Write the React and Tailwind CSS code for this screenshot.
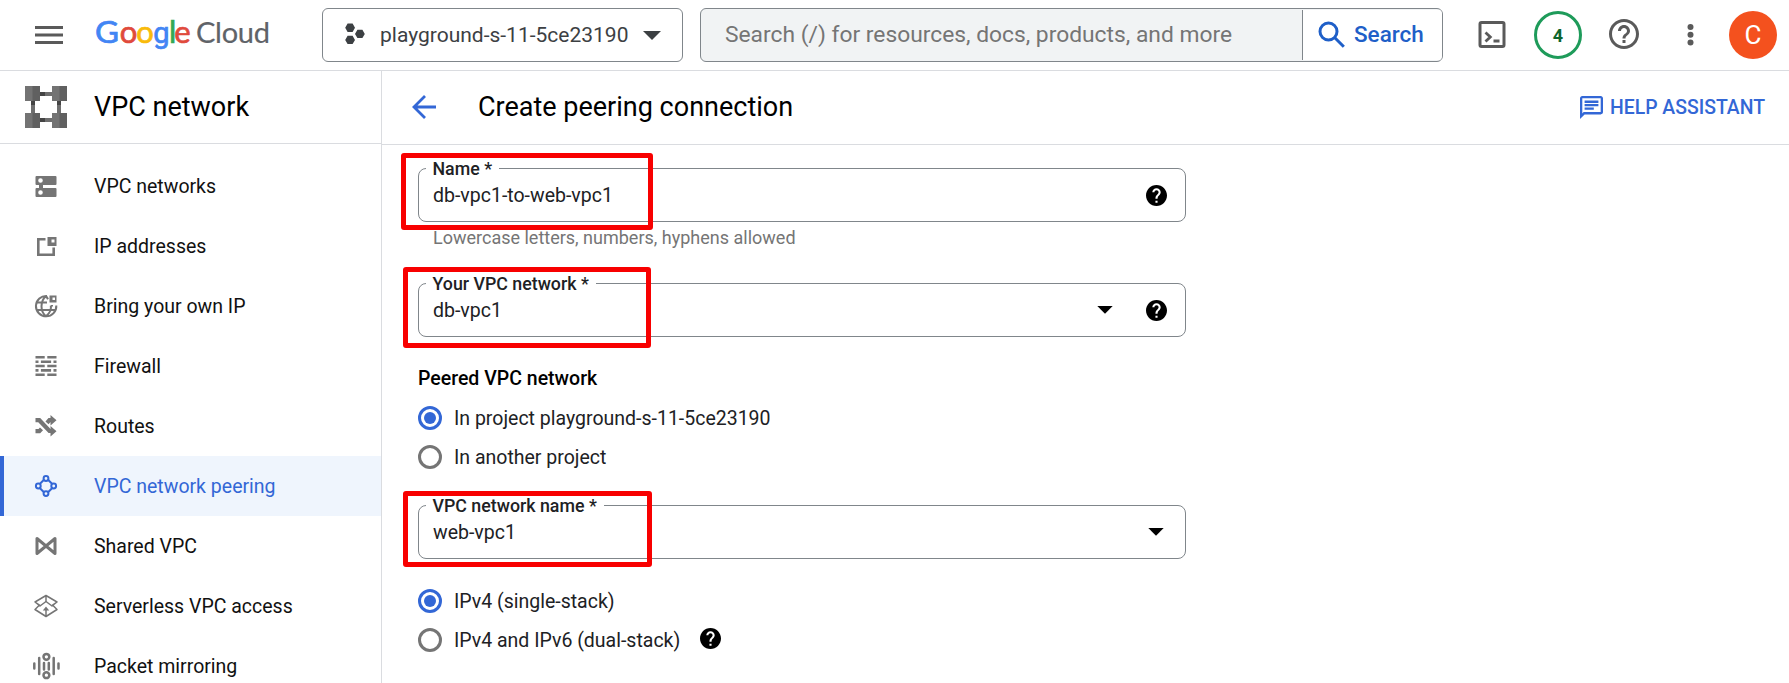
function NavIcon({ name }) {
  const p = { width: 28, height: 28, viewBox: "0 0 28 28", fill: "none", className: "shrink-0" };
  switch (name) {
    case "networks":
      return (
        <svg {...p}>
          <path fill="currentColor" fillRule="evenodd" d="M4.500 4h19a1 1 0 0 1 1 1v7a1 1 0 0 1-1 1H11v3h12.500a1 1 0 0 1 1 1v7a1 1 0 0 1-1 1h-19a1 1 0 0 1-1-1v-7a1 1 0 0 1 1-1H7v-3H4.500a1 1 0 0 1-1-1V5a1 1 0 0 1 1-1zM8.500 6.200a2.300 2.300 0 1 0 0 4.600a2.300 2.300 0 0 0 0-4.600zM8.500 18.200a2.300 2.300 0 1 0 0 4.600a2.300 2.300 0 0 0 0-4.600z" />
        </svg>
      );
    case "ip":
      return (
        <svg {...p}>
          <path stroke="currentColor" strokeWidth="2.600" d="M13.500 7.300H6.300v15.400h15.400V15.500" />
          <path fill="currentColor" fillRule="evenodd" d="M15.500 5h9v9h-9zM19.500 7.500v3h3v-3z" />
        </svg>
      );
    case "globe":
      return (
        <svg {...p} stroke="currentColor" strokeWidth="2">
          <path d="M15 4A10.200 10.200 0 1 0 24.300 13.500M4.800 10.500H15M4.800 18h18.500M14 4.200C8 9 8 19.500 14 24.200C18 21 19.500 17 18.800 13.500M14 4.200c1 1 1.500 2 2 3M20 13v1.500" />
          <path stroke="none" fill="currentColor" fillRule="evenodd" d="M17.500 3.500h7v7h-7zM20.500 5.500v2.500h2.500V5.500z" />
        </svg>
      );
    case "firewall":
      return (
        <svg {...p} stroke="currentColor" strokeWidth="2.600">
          <path d="M3.500 5.300h9.200M15.300 5.300h9.200M3.500 9.700h3M8.900 9.700h10.200M21.500 9.700h3M3.500 14h9.200M15.300 14h9.200M3.500 18.400h3M8.900 18.400h10.200M21.500 18.400h3M3.500 22.800h9.200M15.300 22.800h9.200" />
        </svg>
      );
    case "routes":
      return (
        <svg {...p}>
          <path stroke="currentColor" strokeWidth="4.200" d="M3.500 8.200h3.800L17.500 19h2.500M3.500 19.200h3.800l2.200-2.300M15 10.800l2.400-2.600H20" />
          <path fill="currentColor" d="M18.500 3l6 5.200-6 5.200zM18.500 14l6 5.200-6 5.200z" />
        </svg>
      );
    case "peering":
      return (
        <svg {...p} stroke="currentColor" strokeWidth="2">
          <circle cx="14" cy="6.500" r="2.400" />
          <circle cx="6.300" cy="14" r="2.400" />
          <circle cx="21.700" cy="14" r="2.400" />
          <circle cx="14" cy="21.600" r="2.400" />
          <path d="M11.700 8L8 11.700M16.300 8L20 11.700M8 16.300l3.700 3.700M20 16.300l-3.700 3.700" />
        </svg>
      );
    case "shared":
      return (
        <svg {...p} stroke="currentColor" strokeWidth="3" strokeLinejoin="round">
          <path d="M5 6.500v15L23 6.500v15z" />
        </svg>
      );
    case "serverless":
      return (
        <svg {...p} stroke="currentColor" strokeWidth="1.500" strokeLinejoin="round">
          <path d="M14 3.500L25 10l-4.500 3L25 17.500 14 24.500 3 17.500l4.500-4.500L3 10zM3 10l5 4 6-4.500M25 10l-5 4-6-4.500M14 3.500v6M14 24.500V16" />
          <path d="M10.800 18.500L14 14.500l3.200 4z" fill="currentColor" stroke="none" />
        </svg>
      );
    default:
      return (
        <svg {...p} stroke="currentColor" strokeWidth="2.500" strokeLinecap="round">
          <circle cx="14.400" cy="4.800" r="2.900" />
          <circle cx="14.400" cy="23.200" r="2.900" />
          <path d="M2.300 11.500v5M7.200 6v16M21.700 6v16M26.500 11.500v5M12 11v6.500M16.800 11v6.500" />
        </svg>
      );
  }
}

function Logo() {
  return (
    <svg width="180" height="44" viewBox="0 0 180 44" className="ml-[32px] shrink-0 font-['Lato',sans-serif]" aria-label="Google Cloud">
      <g fontSize="31" strokeWidth="0.700">
        <text x="0" y="30" fill="#4285f4" stroke="#4285f4" textLength="24" lengthAdjust="spacingAndGlyphs">G</text>
        <text x="24.700" y="30" fill="#e04a3c" stroke="#e04a3c">o</text>
        <text x="41.300" y="30" fill="#f9bb0b" stroke="#f9bb0b">o</text>
        <text x="58.300" y="30" fill="#4285f4" stroke="#4285f4" className="font-['Roboto',sans-serif]" fontSize="29">g</text>
        <text x="74.100" y="30" fill="#34a853" stroke="#34a853">l</text>
        <text x="79.300" y="30" fill="#e04a3c" stroke="#e04a3c">e</text>
      </g>
      <text x="101" y="30" fontSize="29" textLength="74" fill="#5f6368" stroke="#5f6368" strokeWidth="0.200">Cloud</text>
    </svg>
  );
}

function HelpFilled() {
  return (
    <svg width="21" height="21" viewBox="2 2 20 20" className="shrink-0 text-black">
      <path fill="currentColor" d="M12 2C6.480 2 2 6.480 2 12s4.480 10 10 10 10-4.480 10-10S17.520 2 12 2zm1 17h-2v-2h2v2zm2.070-7.750l-.9.920C13.450 12.900 13 13.500 13 15h-2v-.5c0-1.100.45-2.100 1.170-2.830l1.240-1.260c.37-.36.59-.86.59-1.410 0-1.100-.9-2-2-2s-2 .9-2 2H8c0-2.210 1.790-4 4-4s4 1.790 4 4c0 .88-.36 1.680-.93 2.250z" />
    </svg>
  );
}

function Caret() {
  return (
    <svg width="16" height="8" viewBox="0 0 16 8" className="shrink-0">
      <path d="M0.300 0h15.400L8 7.800z" fill="#000" />
    </svg>
  );
}

function Field({ label, value, mark, children }) {
  return (
    <div className="relative flex h-[54px] w-[768px] items-center rounded-lg border border-[#80868b] pl-[14px] pr-[18px]">
      <span className="absolute -top-[13px] left-[6.500px] bg-white px-[7px] text-[17.800px] font-medium leading-[25px] text-[#202124]">
        {label}
      </span>
      <span className="flex-1 pt-[2px] text-[19.500px] leading-[24px] text-[#202124]">{value}</span>
      {children}
      <div className={"absolute rounded-[3px] border-[5px] border-[#f80000] " + mark} />
    </div>
  );
}

function Radio({ label, checked, children }) {
  return (
    <div className="flex h-[39px] items-center">
      <span className={"flex size-6 items-center justify-center rounded-full border-[3px] " + (checked ? "border-[#3367d6]" : "border-[#757575]")}>
        {checked && <span className="size-3 rounded-full bg-[#3367d6]" />}
      </span>
      <span className="ml-3 pt-[2px] text-[19.500px] leading-[24px] text-[#202124]">{label}</span>
      {children}
    </div>
  );
}

const NAV = [
  ["networks", "VPC networks"],
  ["ip", "IP addresses"],
  ["globe", "Bring your own IP"],
  ["firewall", "Firewall"],
  ["routes", "Routes"],
  ["peering", "VPC network peering"],
  ["shared", "Shared VPC"],
  ["serverless", "Serverless VPC access"],
  ["mirroring", "Packet mirroring"],
];

export default function App() {
  return (
    <div className="flex h-[683px] w-[1789px] flex-col overflow-hidden bg-white font-['Roboto',sans-serif] text-black">
      <header className="flex h-[71px] shrink-0 items-center border-b border-[#dadce0]">
        <svg width="28" height="18" viewBox="0 0 28 18" className="ml-[35px] shrink-0">
          <path d="M0 1.500h28M0 9h28M0 16.500h28" stroke="#5a5a5a" strokeWidth="3" />
        </svg>
        <Logo />
        <div className="ml-[47px] flex h-[54px] w-[361px] shrink-0 items-center rounded-md border border-[#80868b] pl-[22px]">
          <svg width="20" height="22" viewBox="0 0 20 22" fill="#3c4043" className="mb-[3px] shrink-0">
            <path d="M2.600 0.500h5l2.400 4.200-2.400 4.200h-5L.2 4.700zM2.600 12.700h5l2.400 4.200-2.400 4.200h-5L.2 16.900zM12.400 6.700h5l2.400 4.200-2.400 4.200h-5L10 10.900z" />
          </svg>
          <span className="ml-[15px] text-[21px] leading-[28px] text-[#3c4043]">playground-s-11-5ce23190</span>
          <svg width="18" height="9" viewBox="0 0 18 9" className="ml-auto mr-[21px] shrink-0">
            <path d="M0 0h18L9 9z" fill="#3c4043" />
          </svg>
        </div>
        <div className="ml-[17px] flex h-[54px] w-[743px] shrink-0 items-center overflow-hidden rounded-md border border-[#80868b] bg-[#f1f3f4]">
          <span className="flex-1 pl-6 text-[22.800px] leading-[28px] text-[#757575]">Search (/) for resources, docs, products, and more</span>
          <span className="flex h-[50px] w-[140px] items-center border-l border-[#80868b] bg-white pl-[15px] text-[#1f5fc8]">
            <svg width="28" height="28" viewBox="0 0 28 28" fill="none" stroke="currentColor" strokeWidth="3" className="shrink-0">
              <circle cx="10.500" cy="10.500" r="8.500" />
              <path d="M16.800 16.800l9 9" />
            </svg>
            <span className="mb-[2px] ml-2 text-[22.500px] font-medium leading-[28px]">Search</span>
          </span>
        </div>
        <svg width="28" height="28" viewBox="0 0 28 28" fill="none" stroke="#5a5a5a" className="ml-[35px] shrink-0">
          <rect x="2" y="1.500" width="24" height="24" rx="1.500" strokeWidth="3" />
          <path d="M7.500 11.500l4.800 4.500-4.800 4.500M15.500 20h6" strokeWidth="2.800" />
        </svg>
        <span className="ml-7 flex size-12 shrink-0 items-center justify-center rounded-full border-[3px] border-[#1e9b5a] text-[18px] font-bold text-[#0d652d]">4</span>
        <svg width="30" height="30" viewBox="2 2 20 20" fill="#5a5a5a" className="mb-[2px] ml-[27px] shrink-0">
          <path d="M11 18h2v-2h-2v2zm1-16C6.480 2 2 6.480 2 12s4.480 10 10 10 10-4.480 10-10S17.520 2 12 2zm0 18c-4.410 0-8-3.590-8-8s3.590-8 8-8 8 3.590 8 8-3.590 8-8 8zm0-14c-2.210 0-4 1.790-4 4h2c0-1.100.9-2 2-2s2 .9 2 2c0 2-3 1.750-3 5h2c0-2.250 3-2.500 3-5 0-2.210-1.790-4-4-4z" />
        </svg>
        <svg width="7" height="22" viewBox="0 0 7 22" fill="#5a5a5a" className="ml-[48px] shrink-0">
          <circle cx="3.500" cy="3" r="3" /><circle cx="3.500" cy="10.700" r="3" /><circle cx="3.500" cy="18.400" r="3" />
        </svg>
        <span className="ml-[35px] flex size-12 shrink-0 items-center justify-center rounded-full bg-[#f4511e] text-[26px] text-white">C</span>
      </header>

      <div className="flex min-h-0 flex-1">
        <aside className="flex w-[382px] shrink-0 flex-col overflow-hidden border-r border-[#dadce0]">
          <div className="flex h-[73px] shrink-0 items-center border-b border-[#dadce0] pl-[25px]">
            <svg width="42" height="42" viewBox="0 0 42 42" className="shrink-0">
              <path d="M15 6h12v4H15zM15 32h12v4H15zM6 15h4v12H6zM32 15h4v12h-4z" fill="#6e6e6e" />
              <path d="M15 6h5v4h-5zM15 32h5v4h-5zM6 15h4v4H6zM32 15h4v4h-4z" fill="#444" />
              <path d="M0 0h15v15H0zM27 0h15v15H27zM0 27h15v15H0zM27 27h15v15H27z" fill="#737373" />
              <path d="M7.500 0H15v15H7.500zM34.500 0H42v15h-7.500zM7.500 27H15v15H7.500zM34.500 27H42v15h-7.500z" fill="#606060" />
            </svg>
            <span className="ml-[27px] text-[27px] leading-[32px]">VPC network</span>
          </div>
          <nav className="flex flex-col pt-3">
            {NAV.map(([icon, label]) => {
              const active = icon === "peering";
              return (
                <div key={label} className={"flex h-[60px] shrink-0 items-center border-l-4 pl-7 " + (active ? "border-[#3367d6] bg-[#eff5fd] text-[#3367d6]" : "border-transparent text-[#757575]")}>
                  <NavIcon name={icon} />
                  <span className={"ml-[34px] pt-[2px] text-[19.500px] leading-[24px] " + (active ? "" : "text-[#111]")}>{label}</span>
                </div>
              );
            })}
          </nav>
        </aside>

        <main className="flex flex-1 flex-col">
          <div className="flex h-[74px] shrink-0 items-center border-b border-[#dadce0] pl-[30px] pr-6">
            <svg width="24" height="24" viewBox="0 0 24 24" fill="none" stroke="#3367d6" strokeWidth="2.800" className="mb-px shrink-0">
              <path d="M24 12H2.500M13 1L2 12l11 11" />
            </svg>
            <span className="ml-[42px] pb-[2px] text-[27px] leading-[32px]">Create peering connection</span>
            <svg width="23" height="23" viewBox="2 2 20 20" fill="#3367d6" className="ml-auto shrink-0">
              <path d="M4 4h16v12H5.170L4 17.170V4m0-2c-1.100 0-1.990.9-1.990 2L2 22l4-4h14c1.100 0 2-.9 2-2V4c0-1.100-.9-2-2-2H4zm2 10h8v2H6v-2zm0-3h12v2H6V9zm0-3h12v2H6V6z" />
            </svg>
            <span className="ml-[7px] text-[19.400px] font-medium text-[#3367d6]">HELP ASSISTANT</span>
          </div>

          <form className="flex flex-col pl-9 pt-[23px]">
            <Field label="Name *" value="db-vpc1-to-web-vpc1" mark="-left-[18px] -top-[16px] h-[77px] w-[252px]">
              <HelpFilled />
            </Field>
            <div className="h-[61px] pl-[15px] pt-[4px] text-[18px] leading-[24px] text-[#757575]">Lowercase letters, numbers, hyphens allowed</div>
            <Field label="Your VPC network *" value="db-vpc1" mark="-left-[16px] -top-[17px] h-[81px] w-[248px]">
              <Caret />
              <span className="ml-[33px]"><HelpFilled /></span>
            </Field>
            <div className="flex h-[61px] items-end pb-[7px] text-[19.500px] font-medium leading-[24px] text-black">Peered VPC network</div>
            <Radio label="In project playground-s-11-5ce23190" checked />
            <Radio label="In another project" />
            <div className="h-[29px]" />
            <Field label="VPC network name *" value="web-vpc1" mark="-left-[16px] -top-[15px] h-[76px] w-[249px]">
              <span className="mr-[3px]"><Caret /></span>
            </Field>
            <div className="h-[22px]" />
            <Radio label="IPv4 (single-stack)" checked />
            <Radio label="IPv4 and IPv6 (dual-stack)">
              <span className="mb-[2px] ml-5"><HelpFilled /></span>
            </Radio>
          </form>
        </main>
      </div>
    </div>
  );
}
